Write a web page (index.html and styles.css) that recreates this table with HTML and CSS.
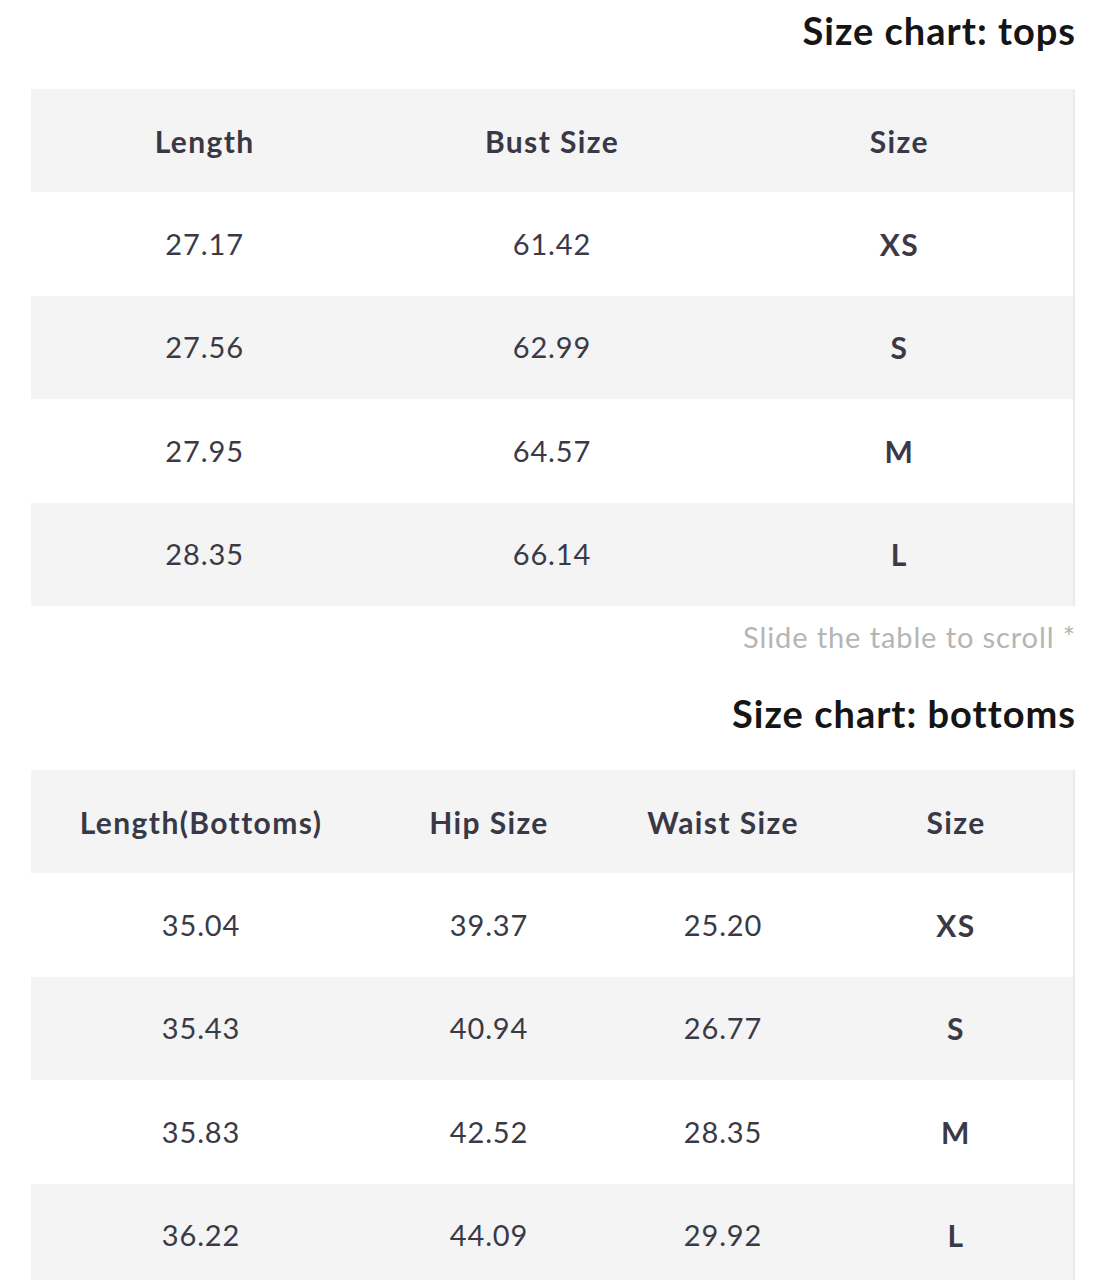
FILE: index.html
```html
<!DOCTYPE html>
<html lang="en">
<head>
<meta charset="utf-8">
<title>Size chart</title>
<link rel="stylesheet" href="styles.css">
</head>
<body>
<div class="page">
  <section class="chart">
    <h2 class="chart-title chart-title--first">Size chart: tops</h2>
    <div class="table-wrap">
      <table class="size-table size-table--tops">
        <thead>
          <tr><th>Length</th><th>Bust Size</th><th>Size</th></tr>
        </thead>
        <tbody>
          <tr><td>27.17</td><td>61.42</td><td class="size">XS</td></tr>
          <tr><td>27.56</td><td>62.99</td><td class="size">S</td></tr>
          <tr><td>27.95</td><td>64.57</td><td class="size">M</td></tr>
          <tr><td>28.35</td><td>66.14</td><td class="size">L</td></tr>
        </tbody>
      </table>
    </div>
    <p class="hint">Slide the table to scroll *</p>
  </section>
  <section class="chart">
    <h2 class="chart-title">Size chart: bottoms</h2>
    <div class="table-wrap">
      <table class="size-table size-table--bottoms">
        <thead>
          <tr><th>Length(Bottoms)</th><th>Hip Size</th><th>Waist Size</th><th>Size</th></tr>
        </thead>
        <tbody>
          <tr><td>35.04</td><td>39.37</td><td>25.20</td><td class="size">XS</td></tr>
          <tr><td>35.43</td><td>40.94</td><td>26.77</td><td class="size">S</td></tr>
          <tr><td>35.83</td><td>42.52</td><td>28.35</td><td class="size">M</td></tr>
          <tr><td>36.22</td><td>44.09</td><td>29.92</td><td class="size">L</td></tr>
        </tbody>
      </table>
    </div>
  </section>
</div>
</body>
</html>
```

FILE: styles.css
```css
html, body {
  margin: 0;
  padding: 0;
  background: #ffffff;
}

body {
  font-family: Lato, "Noto Sans", "Liberation Sans", sans-serif;
  color: #363642;
}

.page {
  width: 1044px;
  margin-left: 31px;
}

.chart-title {
  margin: 0 -1px 35px 0;
  font-size: 38px;
  line-height: 44px;
  letter-spacing: 1px;
  font-weight: 700;
  color: #151515;
  text-align: right;
}

.chart-title--first {
  margin-top: 8px;
  margin-bottom: 37px;
}

.table-wrap {
  border-right: 2px solid #ebebeb;
}

.size-table {
  width: 100%;
  border-collapse: collapse;
  table-layout: fixed;
}

.size-table th,
.size-table td {
  height: 103.4px;
  padding: 0;
  text-align: center;
  vertical-align: middle;
  line-height: 34px;
}

.size-table th {
  font-size: 30px;
  letter-spacing: 1.4px;
  font-weight: 700;
  color: #383846;
  background: #f4f4f4;
}

.size-table td {
  font-size: 29px;
  letter-spacing: 0.9px;
  font-weight: 400;
  color: #3a3a46;
}

.size-table td.size {
  font-size: 30px;
  letter-spacing: 1.4px;
  font-weight: 700;
}

.size-table tbody tr:nth-child(even) td {
  background: #f4f4f4;
}

.size-table--bottoms th:nth-child(1) { width: 340px; }
.size-table--bottoms th:nth-child(2) { width: 236px; }
.size-table--bottoms th:nth-child(3) { width: 232px; }

.hint {
  margin: 11px -1px 34px 0;
  font-size: 29px;
  line-height: 40px;
  letter-spacing: 0.9px;
  color: #b5b5b5;
  text-align: right;
  font-weight: 400;
}
```
